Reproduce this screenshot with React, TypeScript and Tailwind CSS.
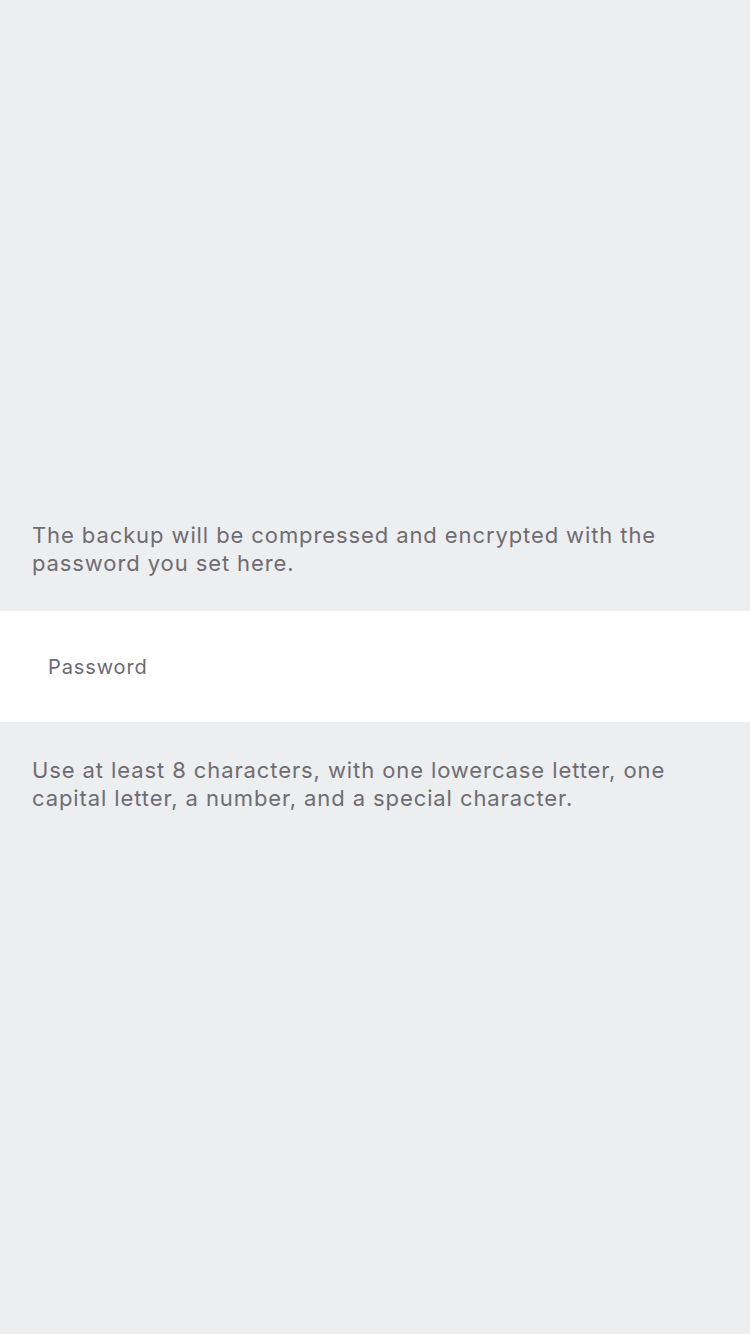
import React from "react";

const App = () => {
  return (
    <div
      className="min-h-[1334px] w-full bg-[#edeef0] text-[#6d6d72]"
      style={{ fontFamily: "Inter, 'Noto Sans', sans-serif" }}
    >
      <div className="px-8 pt-[521px] pb-[34px]">
        <p className="text-[22px] leading-[28px] tracking-[0.9px]">
          The backup will be compressed and encrypted with the password you set here.
        </p>
      </div>

      {/* Password field */}
      <div className="flex h-[111px] items-center bg-white px-12">
        <span className="text-[20px] tracking-[0.9px] text-[#6b6b70]">Password</span>
      </div>

      <div className="px-8 pt-[34px]">
        <p className="text-[22px] leading-[28px] tracking-[0.9px]">
          Use at least 8 characters, with one lowercase letter, one capital letter, a number, and a special character.
        </p>
      </div>
    </div>
  );
};

export default App;
